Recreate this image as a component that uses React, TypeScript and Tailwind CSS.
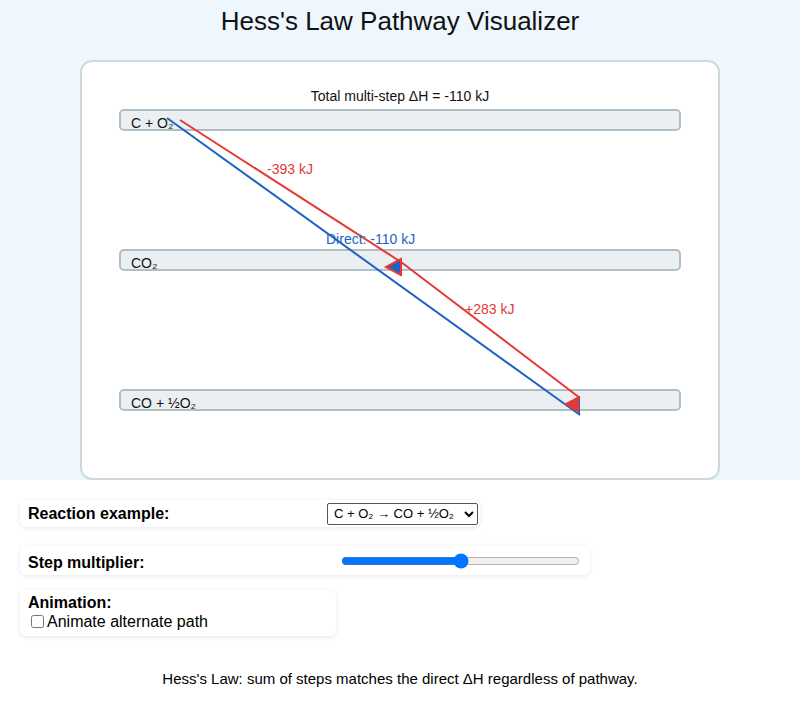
import React, { useState } from "react"

// energy levels drawn as bars in the diagram
const levels = [
  { y: 30, label: "C + O₂" },
  { y: 170, label: "CO₂" },
  { y: 310, label: "CO + ½O₂" },
]

const RED = "#e53935"
const BLUE = "#1e63c4"

function PathwayDiagram() {
  return (
    <svg width={600} height={380} viewBox="0 0 600 380" className="block">
      <text x={300} y={21} textAnchor="middle" fontSize={14} fill="#111">
        Total multi-step ΔH = -110 kJ
      </text>

      {levels.map((l) => (
        <g key={l.label}>
          <rect x={20} y={l.y} width={560} height={20} rx={4} fill="#eceff1" stroke="#b0bec5" strokeWidth={2} />
          <text x={31} y={l.y + 18} fontSize={14} fill="#111">
            {l.label}
          </text>
        </g>
      ))}

      {/* direct path */}
      <line x1={67} y1={38} x2={480} y2={335} stroke={BLUE} strokeWidth={2} />
      <polygon points="480,316 480,335 478,335 478,316" fill={BLUE} />

      {/* alternate path, step 1 */}
      <line x1={80} y1={40} x2={301} y2={182} stroke={RED} strokeWidth={2} />
      {/* alternate path, step 2 */}
      <line x1={301} y1={182} x2={480} y2={318} stroke={RED} strokeWidth={2} />

      {/* arrow heads */}
      <polygon points="301,179 301,195 286,187" fill={BLUE} stroke={RED} strokeWidth={2} strokeLinejoin="miter" />
      <polygon points="479,316 479,333 464,324" fill={RED} />

      <text x={167} y={94} fontSize={14} fill={RED}>
        -393 kJ
      </text>
      <text x={226} y={164} fontSize={14} fill={BLUE}>
        Direct: -110 kJ
      </text>
      <text x={365} y={234} fontSize={14} fill={RED}>
        +283 kJ
      </text>
    </svg>
  )
}

export default function App() {
  const [mult, setMult] = useState(50)
  const [animate, setAnimate] = useState(false)

  return (
    <div className="min-h-[702px] bg-white text-black font-['Liberation_Sans',Arial,sans-serif]">
      <div className="bg-[#eef6fe] pt-[6px]">
        <h1 className="text-center text-[26px] leading-[30px] text-[#111]">Hess's Law Pathway Visualizer</h1>
        <div className="mx-auto mt-[24px] w-[640px] rounded-[12px] border-2 border-[#cfd8dc] bg-white p-[18px]">
          <PathwayDiagram />
        </div>
      </div>

      <div className="px-[20px] pt-[20px]">
        <div className="flex h-[27px] w-[460px] items-center rounded-[6px] bg-white pl-[8px] pr-[2px] shadow-[0_1px_4px_rgba(0,0,0,0.1)]">
          <label className="w-[299px] pt-[1px] text-[16px] font-bold">Reaction example:</label>
          <select className="h-[22px] w-[151px] rounded-[2px] border border-[#555] bg-white px-[2px] text-[13px]">
            <option>C + O₂ → CO + ½O₂</option>
          </select>
        </div>

        <div className="mt-[19px] flex h-[29px] w-[570px] items-center rounded-[6px] bg-white pl-[8px] shadow-[0_1px_4px_rgba(0,0,0,0.1)]">
          <label className="w-[313px] pt-[4px] text-[16px] font-bold">Step multiplier:</label>
          <input
            type="range"
            min={0}
            max={100}
            value={mult}
            onChange={(e) => setMult(Number(e.target.value))}
            className="w-[239px] accent-[#0075ff]"
          />
        </div>

        <div className="mt-[15px] h-[46px] w-[316px] rounded-[6px] bg-white px-[8px] pt-[4px] shadow-[0_1px_4px_rgba(0,0,0,0.1)]">
          <div className="text-[16px] font-bold leading-[18px]">Animation:</div>
          <label className="flex items-center text-[16px] leading-[19px]">
            <input
              type="checkbox"
              checked={animate}
              onChange={(e) => setAnimate(e.target.checked)}
              className="mx-[3px] h-[13px] w-[13px]"
            />
            Animate alternate path
          </label>
        </div>

        <p className="mt-[32px] text-center text-[15px]">
          Hess's Law: sum of steps matches the direct ΔH regardless of pathway.
        </p>
      </div>
    </div>
  )
}
